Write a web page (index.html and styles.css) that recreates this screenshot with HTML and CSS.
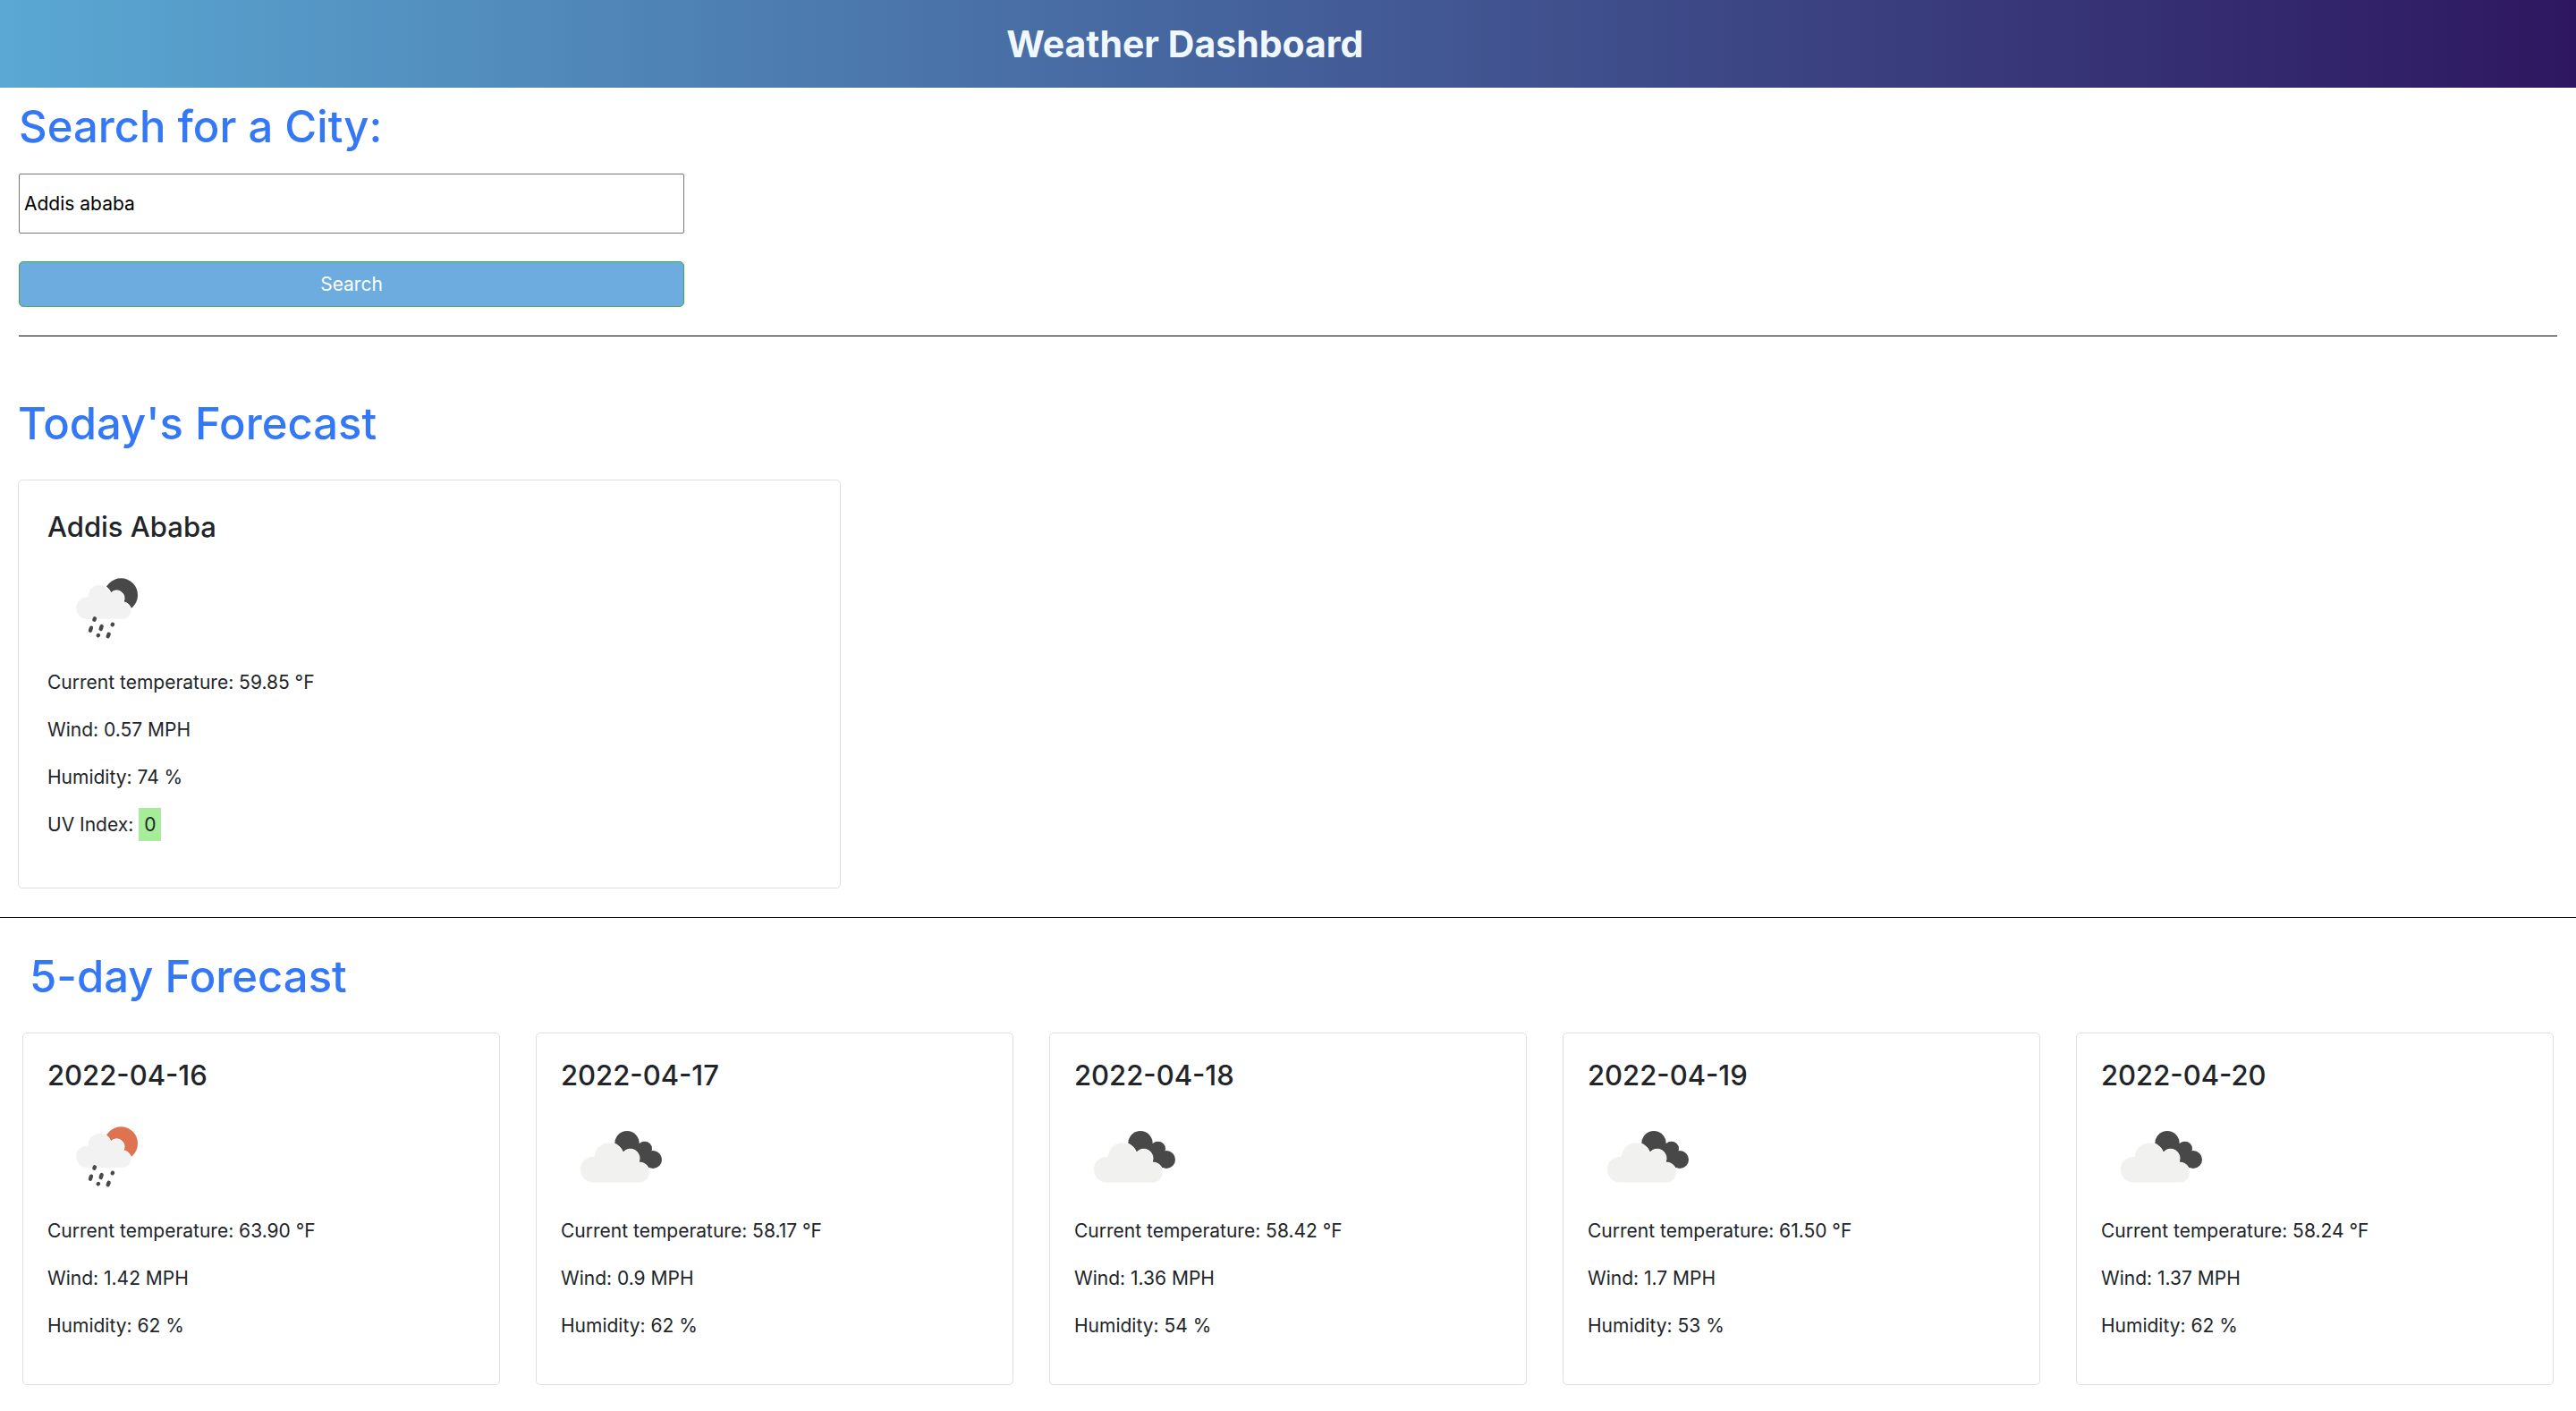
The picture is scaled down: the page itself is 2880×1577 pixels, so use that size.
FILE: index.html
```html
<!DOCTYPE html>
<html lang="en">
<head>
<meta charset="utf-8">
<meta name="viewport" content="width=device-width, initial-scale=1">
<title>Weather Dashboard</title>
<link rel="stylesheet" href="styles.css">
</head>
<body>
<svg class="sprite" aria-hidden="true">
  <defs>
    <g id="rain-cloud">
      <path d="M113 217A38 38 0 0 1 117 141A40 40 0 0 1 195 128A26 26 0 0 1 237 158A30 30 0 0 1 240 217Z" fill="#f2f2f2" stroke="#fff" stroke-width="3"/>
      <g stroke="#484848" stroke-width="13" stroke-linecap="round">
        <path d="M139 218L141 214M126 254L129 245M161 249L164 240M200 235L201 233M152 271L153 270M185 274L188 266"/>
      </g>
    </g>
    <symbol id="rain-night" viewBox="-18 30 360 300">
      <circle cx="229" cy="135" r="56" fill="#484848"/>
      <use href="#rain-cloud"/>
    </symbol>
    <symbol id="rain-day" viewBox="-18 30 360 300">
      <circle cx="229" cy="135" r="56" fill="#de7351"/>
      <use href="#rain-cloud"/>
    </symbol>
    <symbol id="clouds" viewBox="-6 9 360 300">
      <g fill="#484848">
        <circle cx="216" cy="113" r="41"/>
        <circle cx="275" cy="132" r="25"/>
        <circle cx="303" cy="168" r="30"/>
        <path d="M215 113L275 115L303 168L290 196L240 198Z"/>
      </g>
      <path d="M100 246A44 44 0 0 1 106 157A50 50 0 0 1 203 144A31 31 0 0 1 255 177A34 34 0 0 1 260 246Z" fill="#f1f1f0" stroke="#fff" stroke-width="3"/>
    </symbol>
  </defs>
</svg>

<header class="banner">
  <h1 class="banner-title">Weather Dashboard</h1>
</header>

<main>
  <section class="search">
    <h2 class="heading"><label for="city">Search for a City:</label></h2>
    <form class="search-form">
      <input class="city-input" id="city" type="text" value="Addis ababa">
      <button class="search-button" type="button">Search</button>
    </form>
  </section>

  <section class="today">
    <h2 class="heading">Today's Forecast</h2>
    <article class="card card-today">
      <h3 class="card-title">Addis Ababa</h3>
      <svg class="icon" role="img" aria-label="Rain"><use href="#rain-night"/></svg>
      <p>Current temperature: 59.85 °F</p>
      <p>Wind: 0.57 MPH</p>
      <p>Humidity: 74 %</p>
      <p>UV Index: <span class="uv">0</span></p>
    </article>
  </section>

  <section class="week">
    <h2 class="heading week-heading">5-day Forecast</h2>
    <div class="days">
      <article class="card">
        <h3 class="card-title">2022-04-16</h3>
        <svg class="icon" role="img" aria-label="Rain"><use href="#rain-day"/></svg>
        <p>Current temperature: 63.90 °F</p>
        <p>Wind: 1.42 MPH</p>
        <p>Humidity: 62 %</p>
      </article>
      <article class="card">
        <h3 class="card-title">2022-04-17</h3>
        <svg class="icon" role="img" aria-label="Broken clouds"><use href="#clouds"/></svg>
        <p>Current temperature: 58.17 °F</p>
        <p>Wind: 0.9 MPH</p>
        <p>Humidity: 62 %</p>
      </article>
      <article class="card">
        <h3 class="card-title">2022-04-18</h3>
        <svg class="icon" role="img" aria-label="Broken clouds"><use href="#clouds"/></svg>
        <p>Current temperature: 58.42 °F</p>
        <p>Wind: 1.36 MPH</p>
        <p>Humidity: 54 %</p>
      </article>
      <article class="card">
        <h3 class="card-title">2022-04-19</h3>
        <svg class="icon" role="img" aria-label="Broken clouds"><use href="#clouds"/></svg>
        <p>Current temperature: 61.50 °F</p>
        <p>Wind: 1.7 MPH</p>
        <p>Humidity: 53 %</p>
      </article>
      <article class="card">
        <h3 class="card-title">2022-04-20</h3>
        <svg class="icon" role="img" aria-label="Broken clouds"><use href="#clouds"/></svg>
        <p>Current temperature: 58.24 °F</p>
        <p>Wind: 1.37 MPH</p>
        <p>Humidity: 62 %</p>
      </article>
    </div>
  </section>
</main>
</body>
</html>
```
FILE: styles.css
```css
* {
  box-sizing: border-box;
}

body {
  margin: 0;
  background: #fff;
  color: #212529;
  font-family: Inter, "Liberation Sans", sans-serif;
  font-size: 21px;
  line-height: 32px;
}

h1,
h2,
h3,
p {
  margin: 0;
}

.sprite {
  display: none;
}

.banner {
  padding: 17px 0;
  background: linear-gradient(to right, #5aa8d3, #2e1760);
}

.banner-title {
  width: 92%;
  color: #f0f8ff;
  font-size: 41px;
  font-weight: 700;
  line-height: 64px;
  text-align: center;
}

.heading {
  color: #3478f6;
  font-size: 49px;
  font-weight: 500;
  line-height: 68px;
}

.search {
  margin: 0 21px;
  padding: 10px 0 32px;
  border-bottom: 1px solid #000;
}

.search-form {
  display: flex;
  flex-direction: column;
  gap: 31px;
  width: 744px;
  max-width: 100%;
  margin-top: 18px;
}

.city-input {
  height: 67px;
  padding: 0 5px;
  border: 1px solid #767676;
  border-radius: 2px;
  background: #fff;
  color: #000;
  font: inherit;
}

.search-button {
  height: 51px;
  padding: 0;
  border: 1px solid #4ca64c;
  border-radius: 5px;
  background: #6cacdf;
  color: #fff;
  font: inherit;
}

.today {
  padding: 64px 20px 32px;
  border-bottom: 1px solid #000;
}

.card {
  padding: 28px 27px;
  border: 1px solid #dfdfdf;
  border-radius: 5px;
  background: #fff;
}

.card-today {
  width: 920px;
  max-width: 100%;
  margin-top: 28px;
  padding: 33px 32px;
}

.card-title {
  font-size: 31px;
  font-weight: 500;
  line-height: 38px;
}

.icon {
  display: block;
  width: 120px;
  height: 100px;
  margin: 22px 0 17px;
}

.card p {
  margin-bottom: 21px;
}

.uv {
  padding: 6px;
  background: #a6ed9a;
}

.week {
  padding: 32px 25px 30px;
}

.week-heading {
  padding-left: 8px;
}

.days {
  display: grid;
  grid-template-columns: repeat(5, 1fr);
  gap: 40px;
  margin-top: 28px;
}
```
